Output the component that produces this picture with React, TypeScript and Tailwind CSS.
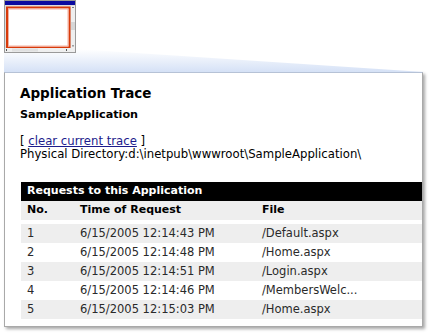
const requests = [
  { no: "1", time: "6/15/2005 12:14:43 PM", file: "/Default.aspx" },
  { no: "2", time: "6/15/2005 12:14:48 PM", file: "/Home.aspx" },
  { no: "3", time: "6/15/2005 12:14:51 PM", file: "/Login.aspx" },
  { no: "4", time: "6/15/2005 12:14:46 PM", file: "/MembersWelc..." },
  { no: "5", time: "6/15/2005 12:15:03 PM", file: "/Home.aspx" },
];

// thumbnail of the browser window plus the "zoom" wedge leading to the panel
const Callout = () => (
  <svg width="433" height="72" viewBox="0 0 433 72" className="block">
    <defs>
      <linearGradient id="wedge" x1="0" y1="0" x2="0" y2="1">
        <stop offset="0" stopColor="#ffffff" />
        <stop offset="1" stopColor="#d5e1f6" />
      </linearGradient>
    </defs>
    <polygon points="4,49 76,49 424,72 4,72" fill="url(#wedge)" />
    {/* window frame */}
    <rect x="4.5" y="0.5" width="71" height="52" fill="#dcdcdc" stroke="#9a9a9a" />
    <rect x="5" y="1" width="70" height="4" fill="#0a0aa0" />
    {/* page area */}
    <rect x="7" y="7.5" width="62.5" height="40" fill="#ffffff" stroke="#d83a0a" strokeWidth="2" />
    <rect x="8.5" y="9" width="59.5" height="37" fill="none" stroke="#f4b0a0" strokeWidth="1" />
    {/* vertical scrollbar */}
    <rect x="71" y="6" width="4" height="42" fill="#efefef" />
    <path d="M72 8 L74 8 L73 6.8 Z" fill="#333" />
    <rect x="71" y="22" width="4" height="8" fill="#d6d6d6" />
    <path d="M72 45.5 L74 45.5 L73 46.8 Z" fill="#333" />
    {/* horizontal scrollbar */}
    <rect x="5" y="48" width="70" height="4" fill="#efefef" />
    <rect x="12" y="48.5" width="26" height="3" fill="#e0e0e0" />
    <rect x="6" y="49" width="1" height="2" fill="#555" />
    <rect x="66" y="49" width="1" height="2" fill="#555" />
  </svg>
);

export default function App() {
  return (
    <div className="w-[433px] h-[336px] bg-white overflow-hidden font-['DejaVu_Sans',Verdana,sans-serif]">
      <Callout />
      <div className="ml-[4px] w-[419px] h-[255px] border border-[#a9a9a9] border-t-[#b6c2d6] bg-white shadow-[2px_2px_3px_rgba(0,0,0,0.35)] pt-[12px]">
        <div className="pl-[15px]">
          <h1 className="text-[13.5px] leading-[17px] font-bold text-black">Application Trace</h1>
          <h2 className="mt-[6px] text-[11.2px] leading-[14px] font-bold text-black">SampleApplication</h2>
          <div className="mt-[13px] text-[11.7px] leading-[13px] text-black">
            <p>
              [ <a href="#" className="text-[#1c1c8c] underline">clear current trace</a> ]
            </p>
            <p>Physical Directory:d:\inetpub\wwwroot\SampleApplication\</p>
          </div>
        </div>

        <div className="ml-[16px] mt-[21px] text-[11px]">
          <div className="h-[19px] bg-black text-white font-bold pl-[6px] flex items-center">
            Requests to this Application
          </div>
          <div className="h-[19px] bg-[#eeeeee] font-bold text-black pl-[6px] grid grid-cols-[53px_182px_1fr] items-center">
            <span>No.</span>
            <span>Time of Request</span>
            <span>File</span>
          </div>
          <div className="mt-[4px] text-[11.5px]">
            {requests.map((r, i) => (
              <div
                key={r.no}
                className={`h-[19px] pl-[6px] grid grid-cols-[53px_182px_1fr] items-center text-[#2a2a2a] ${
                  i % 2 === 0 ? "bg-[#eeeeee]" : "bg-white"
                }`}
              >
                <span>{r.no}</span>
                <span>{r.time}</span>
                <span>{r.file}</span>
              </div>
            ))}
          </div>
        </div>
      </div>
    </div>
  );
}
